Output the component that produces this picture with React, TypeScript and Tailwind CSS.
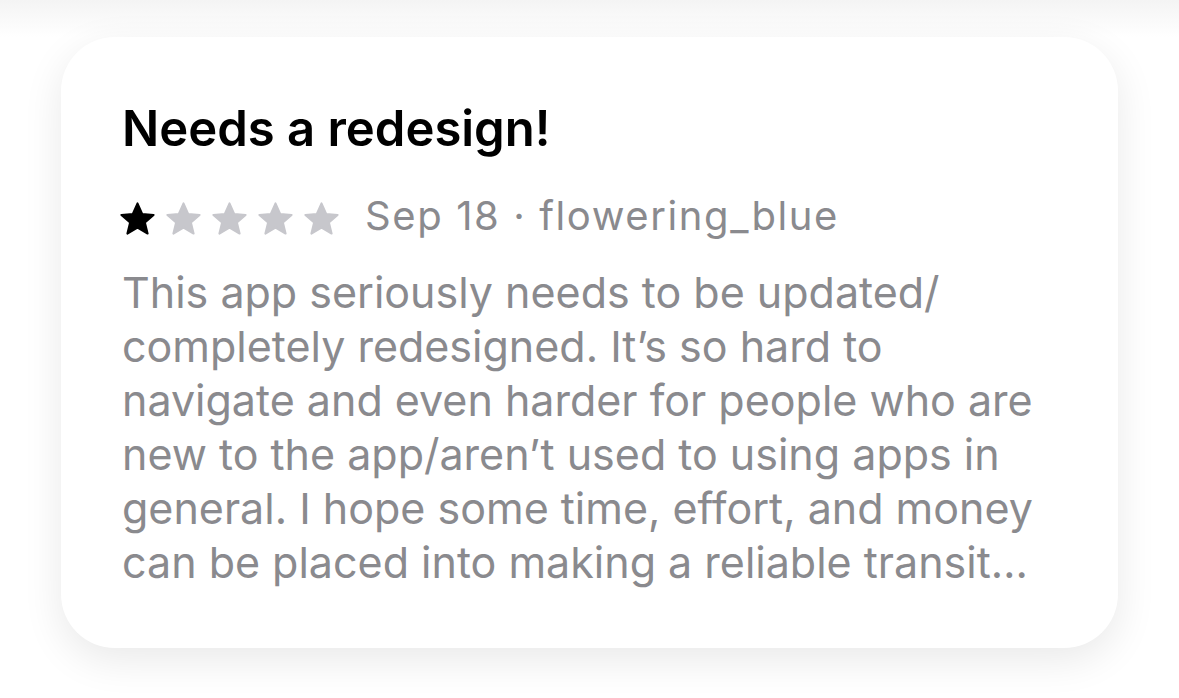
import React from "react";

const Star = ({ filled }: { filled: boolean }) => (
  <svg
    viewBox="0 0 35 33"
    className={
      filled
        ? "w-[35px] h-[33px] fill-black stroke-black"
        : "w-[35px] h-[33px] fill-[#c7c7cc] stroke-[#c7c7cc]"
    }
  >
    <path
      d="M17.5 1.4L22.2 11.9L33.6 12.9L24.9 20.5L27.6 31.6L17.5 25.7L7.4 31.6L10.1 20.5L1.4 12.9L12.8 11.9Z"
      strokeWidth="2"
      strokeLinejoin="round"
    />
  </svg>
);

const lines = [
  "This app seriously needs to be updated/",
  "completely redesigned. It\u2019s so hard to",
  "navigate and even harder for people who are",
  "new to the app/aren\u2019t used to using apps in",
  "general. I hope some time, effort, and money",
  "can be placed into making a reliable transit\u2026",
];

export default function App() {
  return (
    <div className="min-h-screen w-full bg-white bg-gradient-to-b from-[#f4f4f4] to-white to-[37px] pl-[61px] pt-[37px] font-['Inter',sans-serif]">
      <div className="w-[1057px] h-[611px] rounded-[54px] bg-white shadow-[0_12px_40px_rgba(0,0,0,0.09)] pl-[61px] pt-[64px]">
        {/* title */}
        <h1 className="text-[49px] leading-[56px] font-semibold text-black">
          Needs a redesign!
        </h1>

        {/* rating + meta */}
        <div className="flex items-start mt-[32px] h-[48px]">
          <div className="flex gap-[11px] mt-[13px] -ml-[2px]">
            <Star filled />
            <Star filled={false} />
            <Star filled={false} />
            <Star filled={false} />
            <Star filled={false} />
          </div>
          <span className="ml-[26px] mt-[3px] text-[40px] leading-[48px] tracking-[1.6px] text-[#8a8a8e]">
            Sep 18 · flowering_blue
          </span>
        </div>

        {/* body */}
        <div className="mt-[28px] text-[43px] leading-[54px] text-[#8a8a8e]">
          {lines.map((l) => (
            <div key={l} className="whitespace-nowrap">
              {l}
            </div>
          ))}
        </div>
      </div>
    </div>
  );
}
